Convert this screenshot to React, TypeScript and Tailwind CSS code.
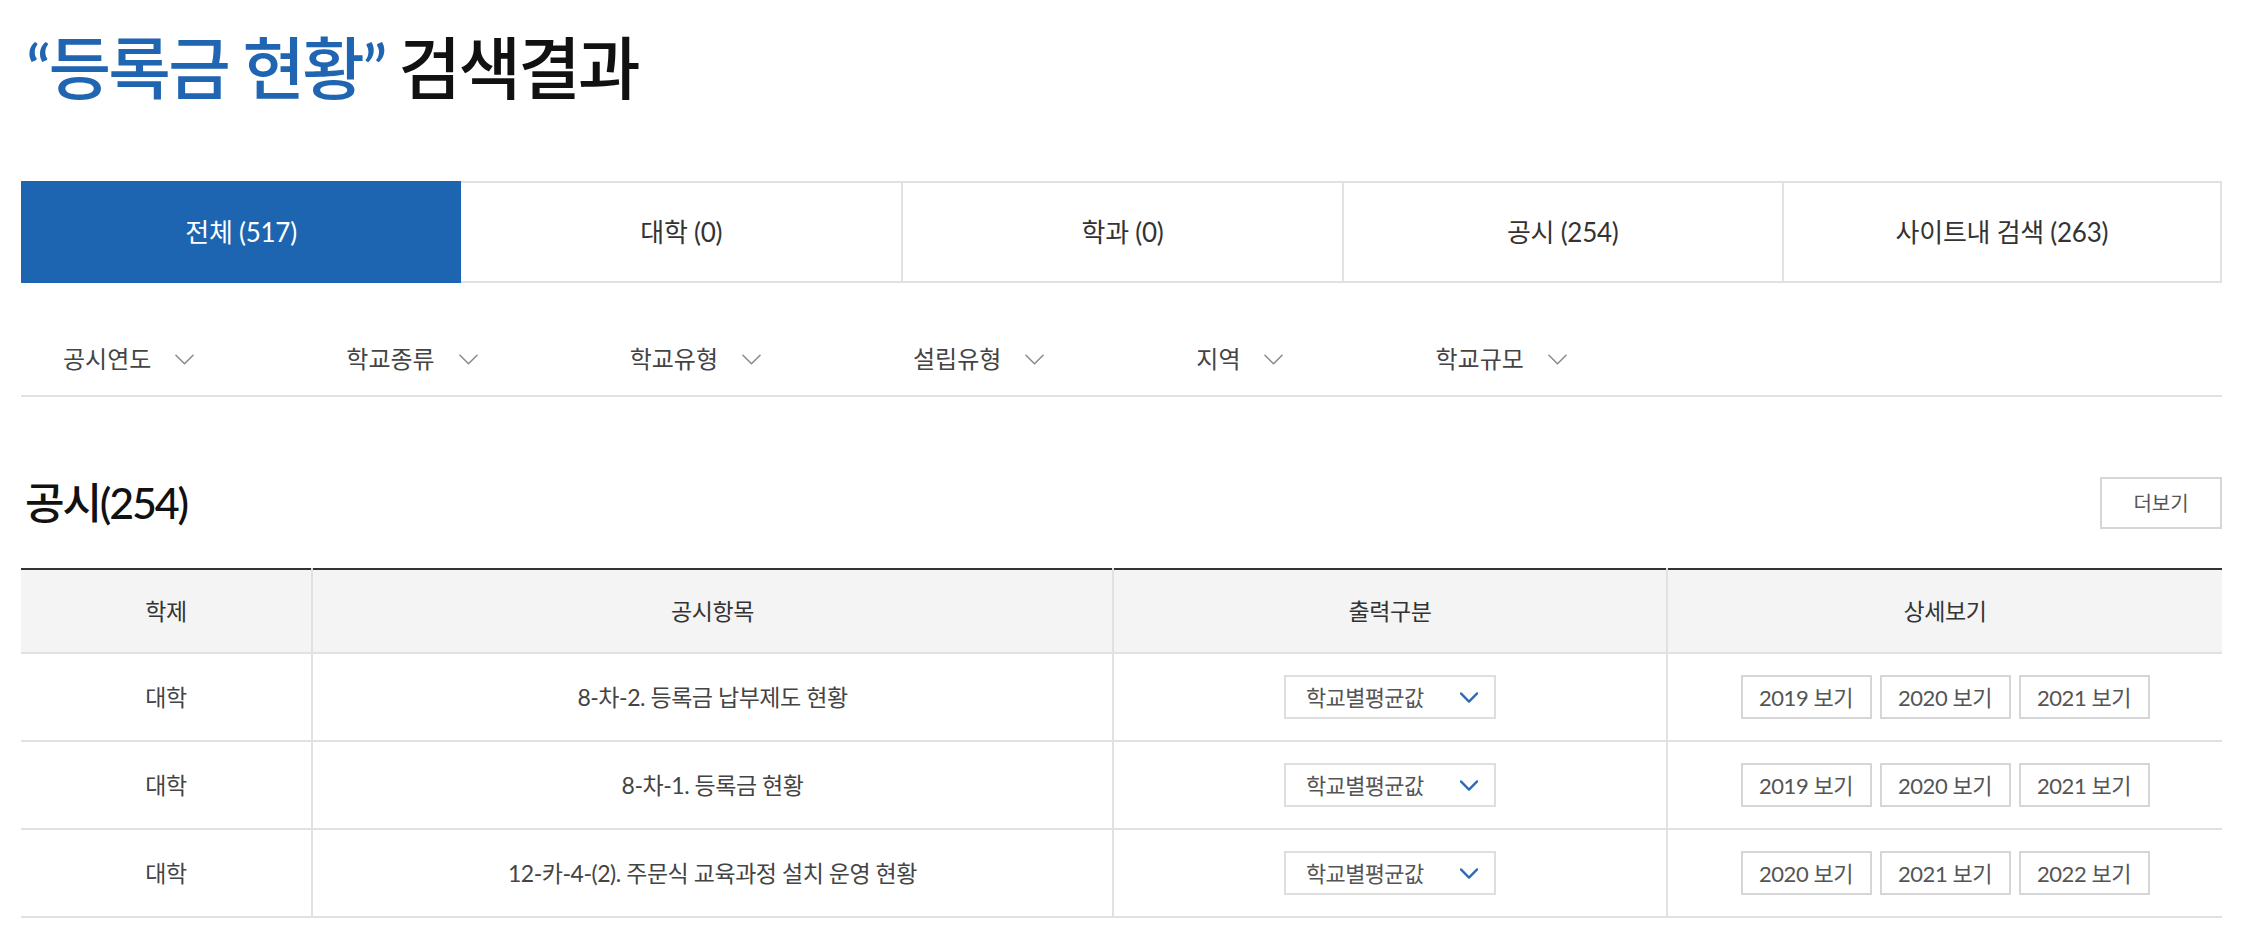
import React from "react"

const TABS = [
  { label: "전체 (517)", active: true },
  { label: "대학 (0)" },
  { label: "학과 (0)" },
  { label: "공시 (254)" },
  { label: "사이트내 검색 (263)" },
]

const FILTERS = ["공시연도", "학교종류", "학교유형", "설립유형", "지역", "학교규모"]

const ROWS = [
  { type: "대학", item: "8-차-2. 등록금 납부제도 현황", years: [2019, 2020, 2021] },
  { type: "대학", item: "8-차-1. 등록금 현황", years: [2019, 2020, 2021] },
  { type: "대학", item: "12-카-4-(2). 주문식 교육과정 설치 운영 현황", years: [2020, 2021, 2022] },
]

function Chevron({ className, strokeWidth = 1.6 }: { className?: string; strokeWidth?: number }) {
  return (
    <svg className={className} viewBox="0 0 20 11" fill="none" aria-hidden>
      <path d="M1 1l9 9 9-9" stroke="currentColor" strokeWidth={strokeWidth} strokeLinecap="round" strokeLinejoin="round" />
    </svg>
  )
}

export default function App() {
  return (
    <div className="min-h-screen bg-white pl-[21px] pr-[32px] font-['Lato','Noto_Sans_CJK_KR',sans-serif] text-[#333]">
      {/* title */}
      <div className="flex h-[136px] items-center pl-[5px]">
        <h1 className="text-[68px] font-medium leading-none tracking-[-0.04em] text-[#111]">
          <span className="text-[#1f65b1]">“등록금 현황”</span> 검색결과
        </h1>
      </div>

      {/* tabs */}
      <div className="mt-[45px] grid h-[102px] grid-cols-5">
        {TABS.map((t, i) => (
          <button
            key={t.label}
            className={
              t.active
                ? "flex items-center justify-center bg-[#1d65b0] text-[26px] tracking-[-0.01em] text-white"
                : `flex items-center justify-center border-y-2 border-[#e1e1e1] text-[26px] tracking-[-0.01em] text-[#333] ${i > 1 ? "border-l-2" : ""} ${i === TABS.length - 1 ? "border-r-2" : ""}`
            }
          >
            {t.label}
          </button>
        ))}
      </div>

      {/* filters */}
      <div className="flex h-[114px] gap-[152px] border-b-2 border-[#e1e1e1] pl-[42px] pt-[60px]">
        {FILTERS.map((f) => (
          <button key={f} className="flex h-[32px] items-center gap-[24px] text-[24px] text-[#444]">
            {f}
            <Chevron className="h-[11px] w-[19px] text-[#8a8a8a]" />
          </button>
        ))}
      </div>

      {/* section heading */}
      <div className="mt-[80px] flex h-[52px] items-center justify-between">
        <h2 className="pl-[4px] text-[43px] font-medium tracking-[-0.05em] text-[#111]">공시(254)</h2>
        <button className="h-[52px] w-[122px] border-2 border-[#d6d6d6] text-[20px] text-[#555]">더보기</button>
      </div>

      {/* table */}
      <table className="mt-[39px] w-full table-fixed border-collapse text-[23px] tracking-[-0.02em]">
        <colgroup>
          <col className="w-[291px]" />
          <col className="w-[801px]" />
          <col className="w-[554px]" />
          <col />
        </colgroup>
        <thead>
          <tr className="h-[84px] border-t-2 border-b-2 border-t-[#333] border-b-[#e1e1e1] bg-[#f4f4f4]">
            {["학제", "공시항목", "출력구분", "상세보기"].map((h, i) => (
              <th key={h} className={`font-normal text-[#333] ${i < 3 ? "border-r-2 border-[#e1e1e1]" : ""}`}>
                {h}
              </th>
            ))}
          </tr>
        </thead>
        <tbody>
          {ROWS.map((r) => (
            <tr key={r.item} className="h-[88px] border-b-2 border-[#e1e1e1] text-[#444]">
              <td className="border-r-2 border-[#e1e1e1] text-center">{r.type}</td>
              <td className="border-r-2 border-[#e1e1e1] text-center">{r.item}</td>
              <td className="border-r-2 border-[#e1e1e1]">
                <div className="flex justify-center">
                  <button className="flex h-[44px] w-[212px] items-center justify-between border-2 border-[#dedede] pl-[20px] pr-[16px] text-[22px] tracking-[-0.03em] text-[#555]">
                    학교별평균값
                    <Chevron className="h-[11px] w-[18px] text-[#2b6cb5]" strokeWidth={2.6} />
                  </button>
                </div>
              </td>
              <td>
                <div className="flex justify-center gap-[8px]">
                  {r.years.map((y) => (
                    <button key={y} className="h-[44px] w-[131px] border-2 border-[#d6d6d6] text-[22px] tracking-[-0.02em] text-[#555]">
                      {y} 보기
                    </button>
                  ))}
                </div>
              </td>
            </tr>
          ))}
        </tbody>
      </table>
    </div>
  )
}
